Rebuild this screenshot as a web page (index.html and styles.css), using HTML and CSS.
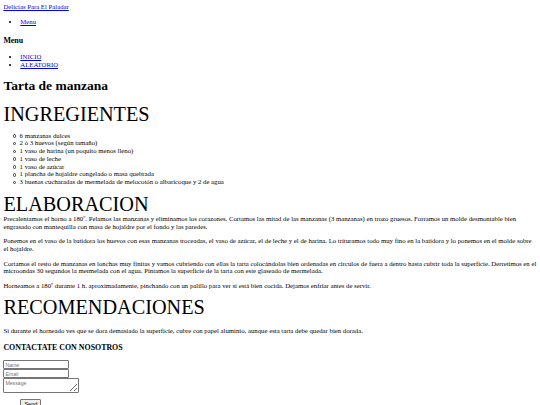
FILE: index.html
```html
<!DOCTYPE html>
<html lang="es">
<head>
<meta charset="utf-8">
<title>Tarta de manzana</title>
<link rel="stylesheet" href="styles.css">
</head>
<body class="page">
<div class="header"><a href="#" class="link">Delicias Para El Paladar</a></div>
<ul class="nav"><li><a href="#" class="link">Menu</a></li></ul>
<h3 class="menu-title">Menu</h3>
<ul class="nav nav-main">
<li><a href="#" class="link">INICIO</a></li>
<li><a href="#" class="link">ALEATORIO</a></li>
</ul>
<h1 class="title">Tarta de manzana</h1>
<h2 class="section section-first">INGREGIENTES</h2>
<ul class="ingredients">
<li>6 manzanas dulces</li>
<li>2 ó 3 huevos (según tamaño)</li>
<li>1 vaso de harina (un poquito menos lleno)</li>
<li>1 vaso de leche</li>
<li>1 vaso de azúcar</li>
<li>1 plancha de hojaldre congelado o masa quebrada</li>
<li>3 buenas cucharadas de mermelada de melocotón o albaricoque y 2 de agua</li>
</ul>
<h2 class="section section-tight">ELABORACION</h2>
<p class="text">Precalentamos el horno a 180º. Pelamos las manzanas y eliminamos los corazones. Cortamos las mitad de las manzanas (3 manzanas) en trozo gruesos. Forramos un molde desmontable bien engrasado con mantequilla con masa de hojaldre por el fondo y las paredes.</p>
<p class="text">Ponemos en el vaso de la batidora los huevos con esas manzanas troceadas, el vaso de azúcar, el de leche y el de harina. Lo trituramos todo muy fino en la batidora y lo ponemos en el molde sobre el hojaldre.</p>
<p class="text">Cortamos el resto de manzanas en lonchas muy finitas y vamos cubriendo con ellas la tarta colocándolas bien ordenadas en círculos de fuera a dentro hasta cubrir toda la superficie. Derretimos en el microondas 30 segundos la mermelada con el agua. Pintamos la superficie de la tarta con este glaseado de mermelada.</p>
<p class="text">Horneamos a 180º durante 1 h. aproximadamente, pinchando con un palillo para ver si está bien cocida. Dejamos enfriar antes de servir.</p>
<h2 class="section">RECOMENDACIONES</h2>
<p class="text text-spaced">Si durante el horneado ves que se dora demasiado la superficie, cubre con papel aluminio, aunque esta tarta debe quedar bien dorada.</p>
<h3 class="contact-title">CONTACTATE CON NOSOTROS</h3>
<form class="contact">
<input class="field" type="text" placeholder="Name">
<input class="field" type="email" placeholder="Email">
<textarea class="field area" placeholder="Message"></textarea>
<div class="actions"><button class="send" type="button">Send</button></div>
</form>
</body>
</html>
```
FILE: styles.css
```css
.page {
  margin: 3.4px;
  font-family: "Liberation Serif", "Times New Roman", serif;
  font-size: 6.75px;
  line-height: 7.8px;
  color: #000;
  background: #fff;
}
.link {
  color: #0000ee;
  text-decoration: underline;
}
.nav {
  margin: 6.75px 0;
  padding-left: 16.9px;
  list-style-type: disc;
}
.menu-title {
  font-size: 7.9px;
  line-height: 9.1px;
  font-weight: bold;
  margin: 10.4px 0 7.9px;
}
.nav-main {
  margin: 7.9px 0 9px;
}
.title {
  font-size: 13.5px;
  line-height: 15.5px;
  font-weight: bold;
  margin: 9px 0;
}
.section {
  font-size: 20.25px;
  line-height: 23.3px;
  font-weight: normal;
  margin: 0;
}
.section-first {
  margin-top: 10px;
}
.section-tight {
  margin-top: 7px;
  margin-bottom: -1.5px;
}
.ingredients {
  list-style: none;
  margin: 5px 0 0;
  padding-left: 16.2px;
}
.ingredients li::before {
  content: "";
  display: inline-block;
  box-sizing: border-box;
  width: 3.6px;
  height: 3.6px;
  border: 0.7px solid #333;
  border-radius: 50%;
  margin-left: -7px;
  margin-right: 3.4px;
  vertical-align: -0.2px;
}
.text {
  margin: 0 0 6.75px;
}
.text-spaced {
  margin-top: 6.75px;
}
.contact-title {
  font-size: 7.9px;
  line-height: 9.1px;
  font-weight: bold;
  margin: 8.6px 0 8.4px;
}
.contact {
  margin: 0;
  display: flex;
  flex-direction: column;
  align-items: flex-start;
}
.field {
  box-sizing: border-box;
  width: 66px;
  height: 9px;
  margin: 0;
  padding: 0 1px;
  border: 0.6px solid #767676;
  border-radius: 1px;
  font-family: "Liberation Sans", Arial, sans-serif;
  font-size: 5.2px;
  color: #000;
}
.field::placeholder {
  color: #757575;
}
.area {
  width: 76px;
  height: 15px;
  resize: both;
  padding: 0.5px 1px;
}
.actions {
  margin: 6px 0;
  padding-left: 17px;
}
.send {
  font-family: "Liberation Sans", Arial, sans-serif;
  font-size: 5.6px;
  height: 9px;
  padding: 0 3px;
  border: 0.6px solid #767676;
  border-radius: 1px;
  background: #efefef;
}
```
